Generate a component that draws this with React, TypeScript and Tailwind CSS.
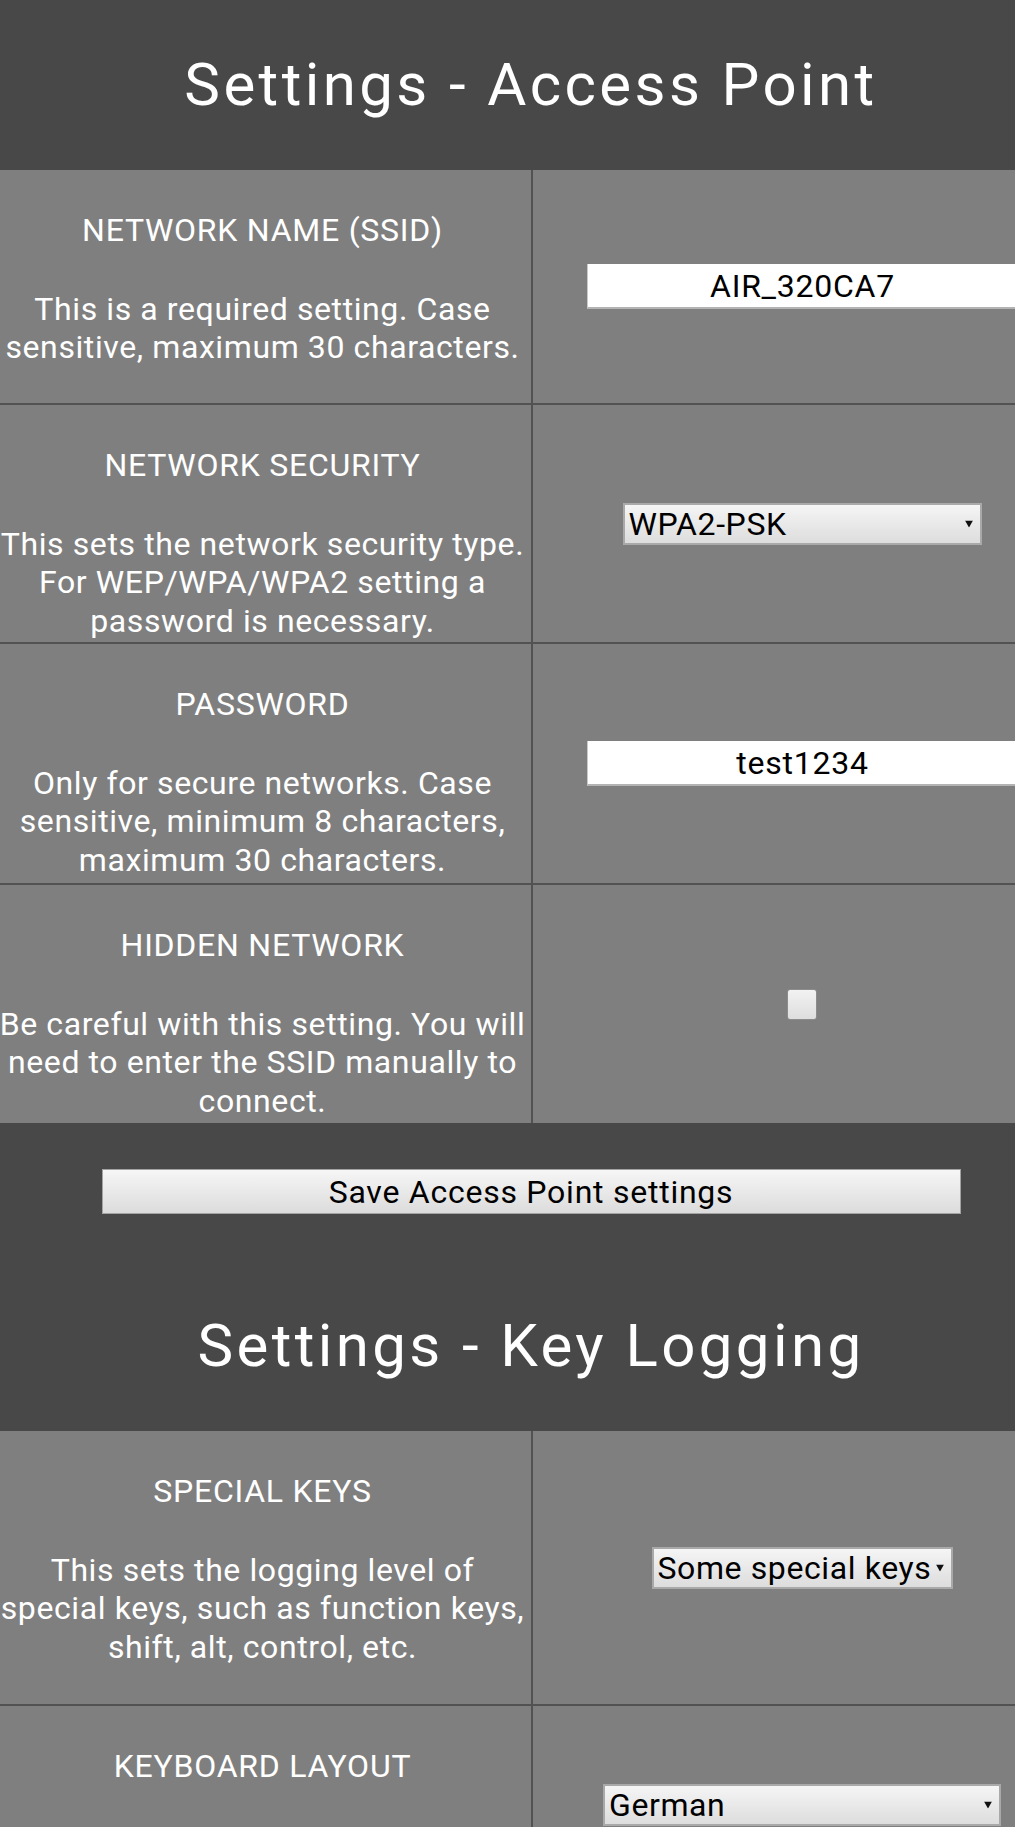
import React from "react"

// fila de ajustes: texto a la izquierda (líneas cortadas como en la pantalla), control centrado a la derecha
function Fila({ label, lineas, alto, children }: { label: string; lineas?: string[]; alto: string; children: React.ReactNode }) {
  return (
    <div className={`flex bg-[#7f7f7f] border-b-2 border-[#525252] ${alto}`}>
      <Textos label={label} lineas={lineas} />
      <div className="w-[2px] shrink-0 bg-[#525252]"></div>
      <div className="flex-1 flex items-center justify-center pl-[9px]">{children}</div>
    </div>
  )
}

function Textos({ label, lineas }: { label: string; lineas?: string[] }) {
  return (
    <div className="w-[531px] shrink-0 pt-[41px] pr-[6px] flex flex-col items-center text-white text-[32px] leading-[38.5px] tracking-[0.6px]">
      <p className="whitespace-nowrap tracking-[0.75px]">{label}</p>
      {lineas && (
        <div className="mt-[40px] flex flex-col items-center">
          {lineas.map((l, i) => (
            <span key={i} className="whitespace-nowrap">{l}</span>
          ))}
        </div>
      )}
    </div>
  )
}

function Texto({ valor }: { valor: string }) {
  return (
    <input
      readOnly
      value={valor}
      className="w-[430px] h-[45px] shrink-0 bg-white text-black text-center text-[32px] tracking-[0.75px] border-l border-[#c9c9c9] border-b-2 border-b-[#b3b3b3] outline-none"
    />
  )
}

function Selector({ valor, ancho }: { valor: string; ancho: string }) {
  return (
    <div className={`relative h-[42px] shrink-0 flex items-center bg-gradient-to-b from-[#f5f5f5] to-[#dddddd] border-2 border-[#a9a9a9] text-black text-[32px] tracking-[0.6px] leading-none pl-[4px] pr-[20px] ${ancho}`}>
      <span className="flex-1 whitespace-nowrap">{valor}</span>
      <svg className="absolute right-[7px] top-1/2 -translate-y-1/2" width="8" height="7" viewBox="0 0 8 7">
        <path d="M0 0 H8 L4 7 Z" fill="#111" />
      </svg>
    </div>
  )
}

function Titulo({ children }: { children: React.ReactNode }) {
  return (
    <h1 className="h-[170px] pt-[50px] text-center text-white text-[60px] leading-[70px] tracking-[3.4px] font-normal">{children}</h1>
  )
}

export default function App() {
  return (
    <div className="w-[1015px] min-h-[1827px] overflow-hidden bg-[#484848]" style={{ fontFamily: "Roboto, 'Noto Sans', sans-serif" }}>
      <div className="w-[1062px]">
        <Titulo>Settings - Access Point</Titulo>

        <Fila label="NETWORK NAME (SSID)" lineas={["This is a required setting. Case", "sensitive, maximum 30 characters."]} alto="h-[235px]">
          <Texto valor="AIR_320CA7" />
        </Fila>
        <Fila label="NETWORK SECURITY" lineas={["This sets the network security type.", "For WEP/WPA/WPA2 setting a", "password is necessary."]} alto="h-[239px]">
          <Selector valor="WPA2-PSK" ancho="w-[359px]" />
        </Fila>
        <Fila label="PASSWORD" lineas={["Only for secure networks. Case", "sensitive, minimum 8 characters,", "maximum 30 characters."]} alto="h-[241px]">
          <Texto valor="test1234" />
        </Fila>
        <div className="flex bg-[#7f7f7f] h-[238px]">
          <Textos label="HIDDEN NETWORK" lineas={["Be careful with this setting. You will", "need to enter the SSID manually to", "connect."]} />
          <div className="w-[2px] shrink-0 bg-[#525252]"></div>
          <div className="flex-1 flex items-center justify-center pl-[9px]">
            <div className="w-[30px] h-[31px] rounded-[3px] border border-[#8c8c8c] bg-gradient-to-b from-[#f2f2f2] to-[#dedede]"></div>
          </div>
        </div>

        {/* BOTON GUARDAR */}
        <div className="h-[138px] pt-[46px] flex justify-center">
          <button className="w-[859px] h-[45px] bg-gradient-to-b from-[#f6f6f6] to-[#dcdcdc] border border-[#a3a3a3] text-black text-[32px] tracking-[0.75px] leading-none">
            Save Access Point settings
          </button>
        </div>

        <Titulo>Settings - Key Logging</Titulo>

        <Fila label="SPECIAL KEYS" lineas={["This sets the logging level of", "special keys, such as function keys,", "shift, alt, control, etc."]} alto="h-[275px]">
          <Selector valor="Some special keys" ancho="w-[301px]" />
        </Fila>
        <Fila label="KEYBOARD LAYOUT" alto="h-[200px]">
          <Selector valor="German" ancho="w-[398px]" />
        </Fila>
      </div>
    </div>
  )
}
